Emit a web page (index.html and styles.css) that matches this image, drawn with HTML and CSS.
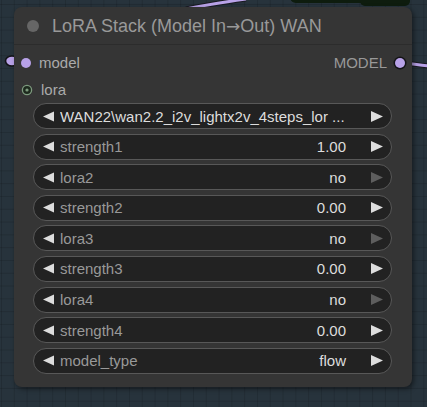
FILE: index.html
```html
<!DOCTYPE html>
<html>
<head>
<meta charset="utf-8">
<link rel="stylesheet" href="styles.css">
</head>
<body>
<div class="canvas">
  <svg class="links" width="427" height="407" viewBox="0 0 427 407">
    <rect x="290" y="-12" width="120" height="15" rx="6" fill="#0e1c0e"/>
    <rect x="360" y="-12" width="50" height="18" rx="5" fill="#0e1c0e"/>
    <path d="M186 9 C205 5 225 2 246 -1" stroke="#1a1a22" stroke-width="5" fill="none"/>
    <path d="M186 9 C205 5 225 2 246 -1" stroke="#b8a2e8" stroke-width="3" fill="none"/>
    <ellipse cx="12" cy="61" rx="6.5" ry="5" fill="#b8a2e8" stroke="#121216" stroke-width="1.6"/>
    <path d="M404 63 C412 64 420 65 430 66" stroke="#1a1a22" stroke-width="5" fill="none"/>
    <path d="M404 63 C412 64 420 65 430 66" stroke="#b8a2e8" stroke-width="3" fill="none"/>
  </svg>

  <div class="node">
    <div class="title">
      <span class="title-dot"></span>
      <span class="title-text">LoRA Stack (Model In<span class="arrow-glyph">→</span>Out) WAN</span>
    </div>
    <div class="slots">
      <div class="slot-row">
        <span class="slot-in"><span class="dot"></span>model</span>
        <span class="slot-out">MODEL<span class="dot out"></span></span>
      </div>
      <div class="slot-row">
        <span class="slot-in">
          <svg class="ring" width="12" height="12" viewBox="0 0 12 12"><circle cx="6" cy="6" r="4.6" fill="#1d2a1e" stroke="#7d9a7e" stroke-width="1.3"/><circle cx="6" cy="6" r="1.6" fill="#7d9a7e"/></svg>lora
        </span>
      </div>
    </div>
    <div class="widgets">
      <div class="widget"><svg class="arr" viewBox="0 0 12 11"><path d="M0 5.5 L12 0 L12 11 Z"/></svg><span class="label value-like">WAN22\wan2.2_i2v_lightx2v_4steps_lor ...</span><span class="value"></span><svg class="arr r" viewBox="0 0 12 11"><path d="M0 0 L12 5.5 L0 11 Z"/></svg></div>
      <div class="widget"><svg class="arr" viewBox="0 0 12 11"><path d="M0 5.5 L12 0 L12 11 Z"/></svg><span class="label">strength1</span><span class="value">1.00</span><svg class="arr r" viewBox="0 0 12 11"><path d="M0 0 L12 5.5 L0 11 Z"/></svg></div>
      <div class="widget"><svg class="arr" viewBox="0 0 12 11"><path d="M0 5.5 L12 0 L12 11 Z"/></svg><span class="label">lora2</span><span class="value">no</span><svg class="arr r dim" viewBox="0 0 12 11"><path d="M0 0 L12 5.5 L0 11 Z"/></svg></div>
      <div class="widget"><svg class="arr" viewBox="0 0 12 11"><path d="M0 5.5 L12 0 L12 11 Z"/></svg><span class="label">strength2</span><span class="value">0.00</span><svg class="arr r" viewBox="0 0 12 11"><path d="M0 0 L12 5.5 L0 11 Z"/></svg></div>
      <div class="widget"><svg class="arr" viewBox="0 0 12 11"><path d="M0 5.5 L12 0 L12 11 Z"/></svg><span class="label">lora3</span><span class="value">no</span><svg class="arr r dim" viewBox="0 0 12 11"><path d="M0 0 L12 5.5 L0 11 Z"/></svg></div>
      <div class="widget"><svg class="arr" viewBox="0 0 12 11"><path d="M0 5.5 L12 0 L12 11 Z"/></svg><span class="label">strength3</span><span class="value">0.00</span><svg class="arr r" viewBox="0 0 12 11"><path d="M0 0 L12 5.5 L0 11 Z"/></svg></div>
      <div class="widget"><svg class="arr" viewBox="0 0 12 11"><path d="M0 5.5 L12 0 L12 11 Z"/></svg><span class="label">lora4</span><span class="value">no</span><svg class="arr r dim" viewBox="0 0 12 11"><path d="M0 0 L12 5.5 L0 11 Z"/></svg></div>
      <div class="widget"><svg class="arr" viewBox="0 0 12 11"><path d="M0 5.5 L12 0 L12 11 Z"/></svg><span class="label">strength4</span><span class="value">0.00</span><svg class="arr r" viewBox="0 0 12 11"><path d="M0 0 L12 5.5 L0 11 Z"/></svg></div>
      <div class="widget"><svg class="arr" viewBox="0 0 12 11"><path d="M0 5.5 L12 0 L12 11 Z"/></svg><span class="label">model_type</span><span class="value">flow</span><svg class="arr r" viewBox="0 0 12 11"><path d="M0 0 L12 5.5 L0 11 Z"/></svg></div>
    </div>
  </div>
</div>
</body>
</html>
```

FILE: styles.css
```css
html, body {
  margin: 0;
  padding: 0;
}
body {
  width: 427px;
  height: 407px;
  overflow: hidden;
  font-family: "Liberation Sans", Arial, sans-serif;
  background-color: #27333c;
  background-image:
    linear-gradient(to right, rgba(0,0,0,0.13) 1px, transparent 1px),
    linear-gradient(to bottom, rgba(0,0,0,0.13) 1px, transparent 1px);
  background-size: 12.8px 12.8px;
  background-position: 1px 4px;
}
.canvas {
  position: relative;
  width: 427px;
  height: 407px;
}
.links {
  position: absolute;
  left: 0;
  top: 0;
}
.node {
  position: absolute;
  left: 14px;
  top: 7px;
  width: 398px;
  height: 380px;
  background: #353535;
  border-radius: 8px;
  box-shadow: 2px 2px 5px rgba(0,0,0,0.45);
  display: flex;
  flex-direction: column;
}
.title {
  height: 37px;
  border-bottom: 1px solid #2c2c2c;
  display: flex;
  align-items: center;
  padding-left: 13px;
}
.title-dot {
  width: 12px;
  height: 12px;
  border-radius: 50%;
  background: #666;
  margin-right: 13px;
}
.title-text {
  color: #999;
  font-size: 18px;
  margin-top: 1px;
  white-space: nowrap;
}
.arrow-glyph {
  font-family: "DejaVu Sans", sans-serif;
  font-size: 17px;
}
.slots {
  padding-top: 4px;
  display: flex;
  flex-direction: column;
}
.slot-row {
  height: 27px;
  display: flex;
  align-items: center;
  justify-content: space-between;
  font-size: 15px;
  color: #aaa;
}
.slot-in {
  display: flex;
  align-items: center;
  padding-left: 7px;
}
.slot-in .dot, .slot-in .ring {
  margin-right: 8px;
}
.slot-out {
  display: flex;
  align-items: center;
  padding-right: 7px;
  color: #999;
}
.dot {
  width: 10px;
  height: 10px;
  border-radius: 50%;
  background: #b8a2e8;
}
.dot.out {
  margin-left: 8px;
  box-shadow: 0 0 0 1.5px #141418;
}
.ring {
  width: 12px;
  height: 12px;
}
.widgets {
  display: flex;
  flex-direction: column;
  gap: 4.6px;
  padding: 0 20px 0 19px;
}
.widget {
  height: 24px;
  border: 1px solid #585858;
  border-radius: 13px;
  background: #222;
  display: flex;
  align-items: center;
  padding: 0 8px 0 9px;
  font-size: 15px;
}
.arr {
  width: 11px;
  height: 11px;
  fill: #ddd;
  flex: none;
}
.arr.r {
  width: 12px;
  margin-left: 25px;
}
.arr.dim {
  fill: #5e5e5e;
}
.label {
  color: #999;
  margin-left: 6px;
  flex: 1;
  white-space: nowrap;
  overflow: hidden;
}
.label.value-like {
  color: #ddd;
}
.value {
  color: #ddd;
}
```
